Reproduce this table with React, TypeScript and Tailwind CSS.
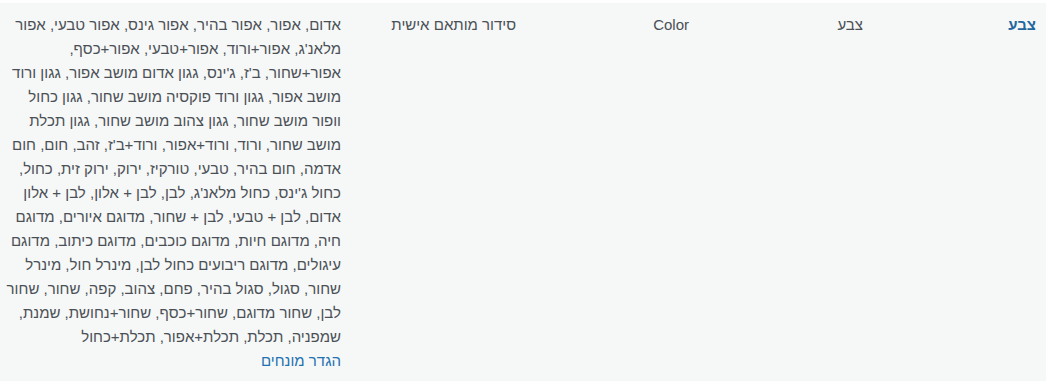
const terms = [
  "אדום, אפור, אפור בהיר, אפור גינס, אפור טבעי, אפור",
  "מלאנ'ג, אפור+ורוד, אפור+טבעי, אפור+כסף,",
  "אפור+שחור, ב'ז, ג'ינס, גגון אדום מושב אפור, גגון ורוד",
  "מושב אפור, גגון ורוד פוקסיה מושב שחור, גגון כחול",
  "וופור מושב שחור, גגון צהוב מושב שחור, גגון תכלת",
  "מושב שחור, ורוד, ורוד+אפור, ורוד+ב'ז, זהב, חום, חום",
  "אדמה, חום בהיר, טבעי, טורקיז, ירוק, ירוק זית, כחול,",
  "כחול ג'ינס, כחול מלאנ'ג, לבן, לבן + אלון, לבן + אלון",
  "אדום, לבן + טבעי, לבן + שחור, מדוגם איורים, מדוגם",
  "חיה, מדוגם חיות, מדוגם כוכבים, מדוגם כיתוב, מדוגם",
  "עיגולים, מדוגם ריבועים כחול לבן, מינרל חול, מינרל",
  "שחור, סגול, סגול בהיר, פחם, צהוב, קפה, שחור, שחור",
  "לבן, שחור מדוגם, שחור+כסף, שחור+נחושת, שמנת,",
  "שמפניה, תכלת, תכלת+אפור, תכלת+כחול",
];

const App = () => {
  return (
    <div
      dir="rtl"
      className="min-h-screen bg-white pt-[3px] text-[15px] leading-[24px] text-[#4a5056]"
      style={{ fontFamily: '"Liberation Sans", Arial, sans-serif' }}
    >
      {/* attribute row */}
      <div className="grid min-h-[378px] grid-cols-[173px_174px_173px_175px_1fr] bg-[#f6f7f7] pt-[10px]">
        <div className="pr-[10px]">
          <a href="#" className="font-bold text-[#22669e]">צבע</a>
        </div>
        <div className="pr-[10px]">צבע</div>
        <div className="pr-[10px]">Color</div>
        <div className="pr-[10px]">סידור מותאם אישית</div>
        <div className="pr-[10px] pl-2">
          {terms.map((line, i) => (
            <div key={i} className="whitespace-nowrap">{line}</div>
          ))}
          <a href="#" className="text-[#2271b1]">הגדר מונחים</a>
        </div>
      </div>
    </div>
  );
};

export default App;
